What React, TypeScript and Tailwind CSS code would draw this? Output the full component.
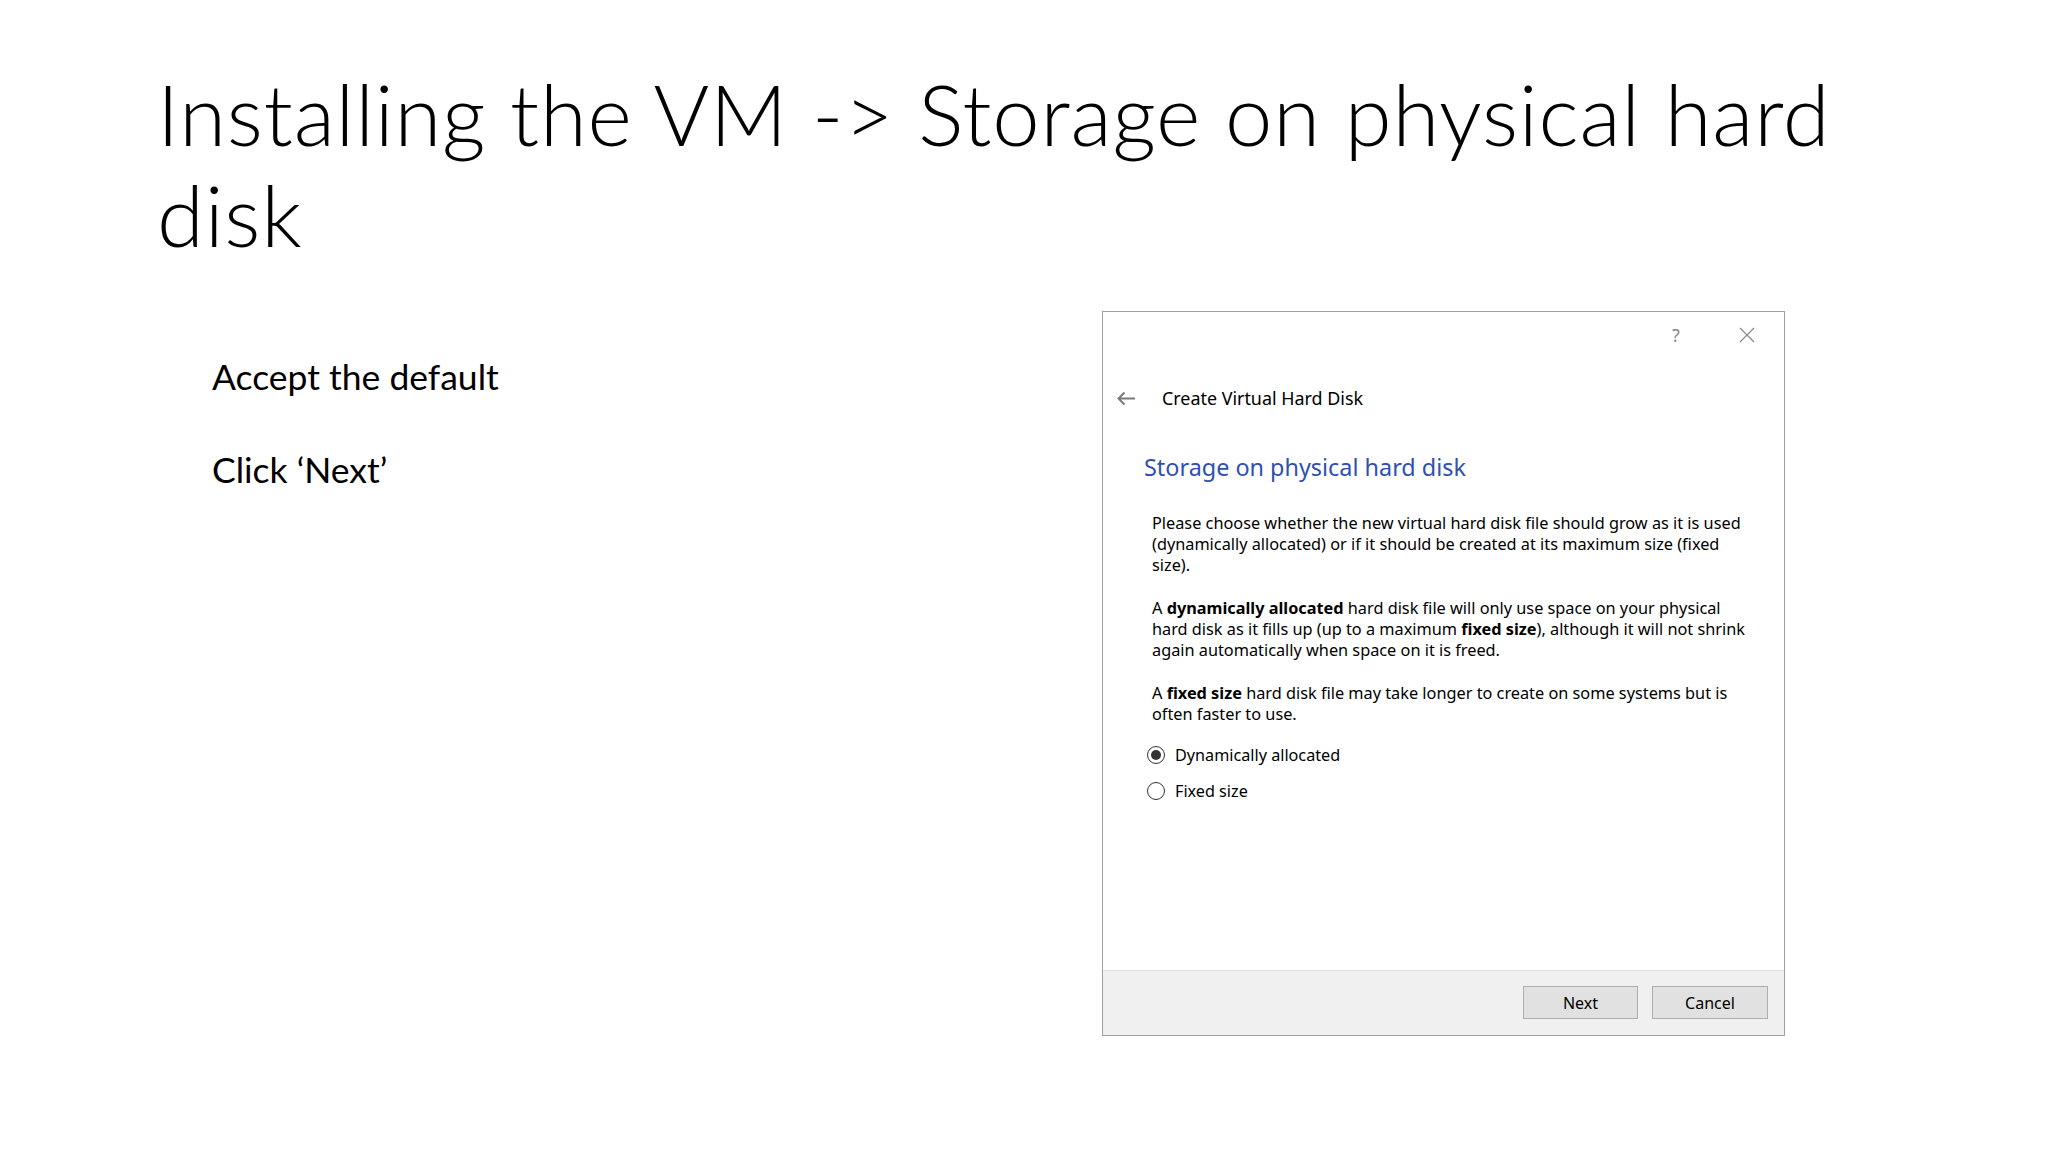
import React from 'react';

const dlgFont = { fontFamily: '"Noto Sans", "Open Sans", sans-serif' };

function Radio({ checked, label }: { checked?: boolean; label: string }) {
  return (
    <div className="flex items-center h-[24px]">
      <span className="w-[18px] h-[18px] rounded-full border border-[#333333] bg-white flex items-center justify-center">
        {checked && <span className="w-[10px] h-[10px] rounded-full bg-[#333333]" />}
      </span>
      <span className="ml-[10px] text-[16.2px] text-black">{label}</span>
    </div>
  );
}

function Dialog() {
  return (
    <div
      className="w-[683px] h-[725px] border border-[#a0a0a0] bg-white flex flex-col shrink-0"
      style={dlgFont}
    >
      {/* title bar */}
      <div className="h-[45px] flex items-center justify-end">
        <span className="w-[24px] text-center text-[18px] text-[#8a8a8a] leading-none">?</span>
        <span className="w-[24px] h-[24px] ml-[47px] mr-[25px] flex items-center justify-center">
          <svg width="16" height="16" viewBox="0 0 16 16">
            <path d="M1 1 L15 15 M15 1 L1 15" stroke="#8a8a8a" strokeWidth="1.2" fill="none" />
          </svg>
        </span>
      </div>

      {/* header */}
      <div className="h-[40px] mt-[21px] flex items-center">
        <svg className="ml-[13px]" width="20" height="15" viewBox="0 0 20 15">
          <path d="M19 7.5 H2.5 M8.5 1.5 L2.5 7.5 L8.5 13.5" stroke="#7a7a7a" strokeWidth="2" fill="none" />
        </svg>
        <span className="ml-[26px] text-[17.9px] text-black">Create Virtual Hard Disk</span>
      </div>

      <div className="mt-[34px] pl-[41px] h-[32px] flex items-center text-[23.4px] text-[#2f50b2]">
        Storage on physical hard disk
      </div>

      <div className="mt-[29px] pl-[49px] text-[16.3px] leading-[21px] text-black whitespace-nowrap">
        <p>
          Please choose whether the new virtual hard disk file should grow as it is used
          <br />
          (dynamically allocated) or if it should be created at its maximum size (fixed
          <br />
          size).
        </p>
        <p className="mt-[22px]">
          A <b>dynamically allocated</b> hard disk file will only use space on your physical
          <br />
          hard disk as it fills up (up to a maximum <b>fixed size</b>), although it will not shrink
          <br />
          again automatically when space on it is freed.
        </p>
        <p className="mt-[22px]">
          A <b>fixed size</b> hard disk file may take longer to create on some systems but is
          <br />
          often faster to use.
        </p>
      </div>

      <div className="mt-[18px] pl-[44px] flex flex-col gap-[12px]">
        <Radio checked label="Dynamically allocated" />
        <Radio label="Fixed size" />
      </div>

      <div className="flex-1" />

      <div className="h-[65px] border-t border-[#dfdfdf] bg-[#f0f0f0] flex justify-end items-start pt-[15px] pr-[16px] gap-[14px]">
        <button className="w-[115px] h-[33px] bg-[#e1e1e1] border border-[#adadad] text-[16px] text-black">
          Next
        </button>
        <button className="w-[116px] h-[33px] bg-[#e1e1e1] border border-[#adadad] text-[16px] text-black">
          Cancel
        </button>
      </div>
    </div>
  );
}

export default function App() {
  return (
    <div
      className="w-[2048px] h-[1152px] bg-white text-black overflow-hidden"
      style={{ fontFamily: 'Lato, Carlito, Calibri, sans-serif' }}
    >
      <h1 className="pt-[63px] pl-[157px] text-[85px] leading-[101px] tracking-[0.8px] font-light">
        Installing the VM -&gt; Storage on physical hard
        <br />
        disk
      </h1>

      <div className="mt-[46px] pl-[212px] flex items-start">
        <div className="w-[890px] pt-[43px] text-[35.5px] leading-[46.5px]">
          <p>Accept the default</p>
          <p>&nbsp;</p>
          <p>Click ‘Next’</p>
        </div>
        <Dialog />
      </div>
    </div>
  );
}
